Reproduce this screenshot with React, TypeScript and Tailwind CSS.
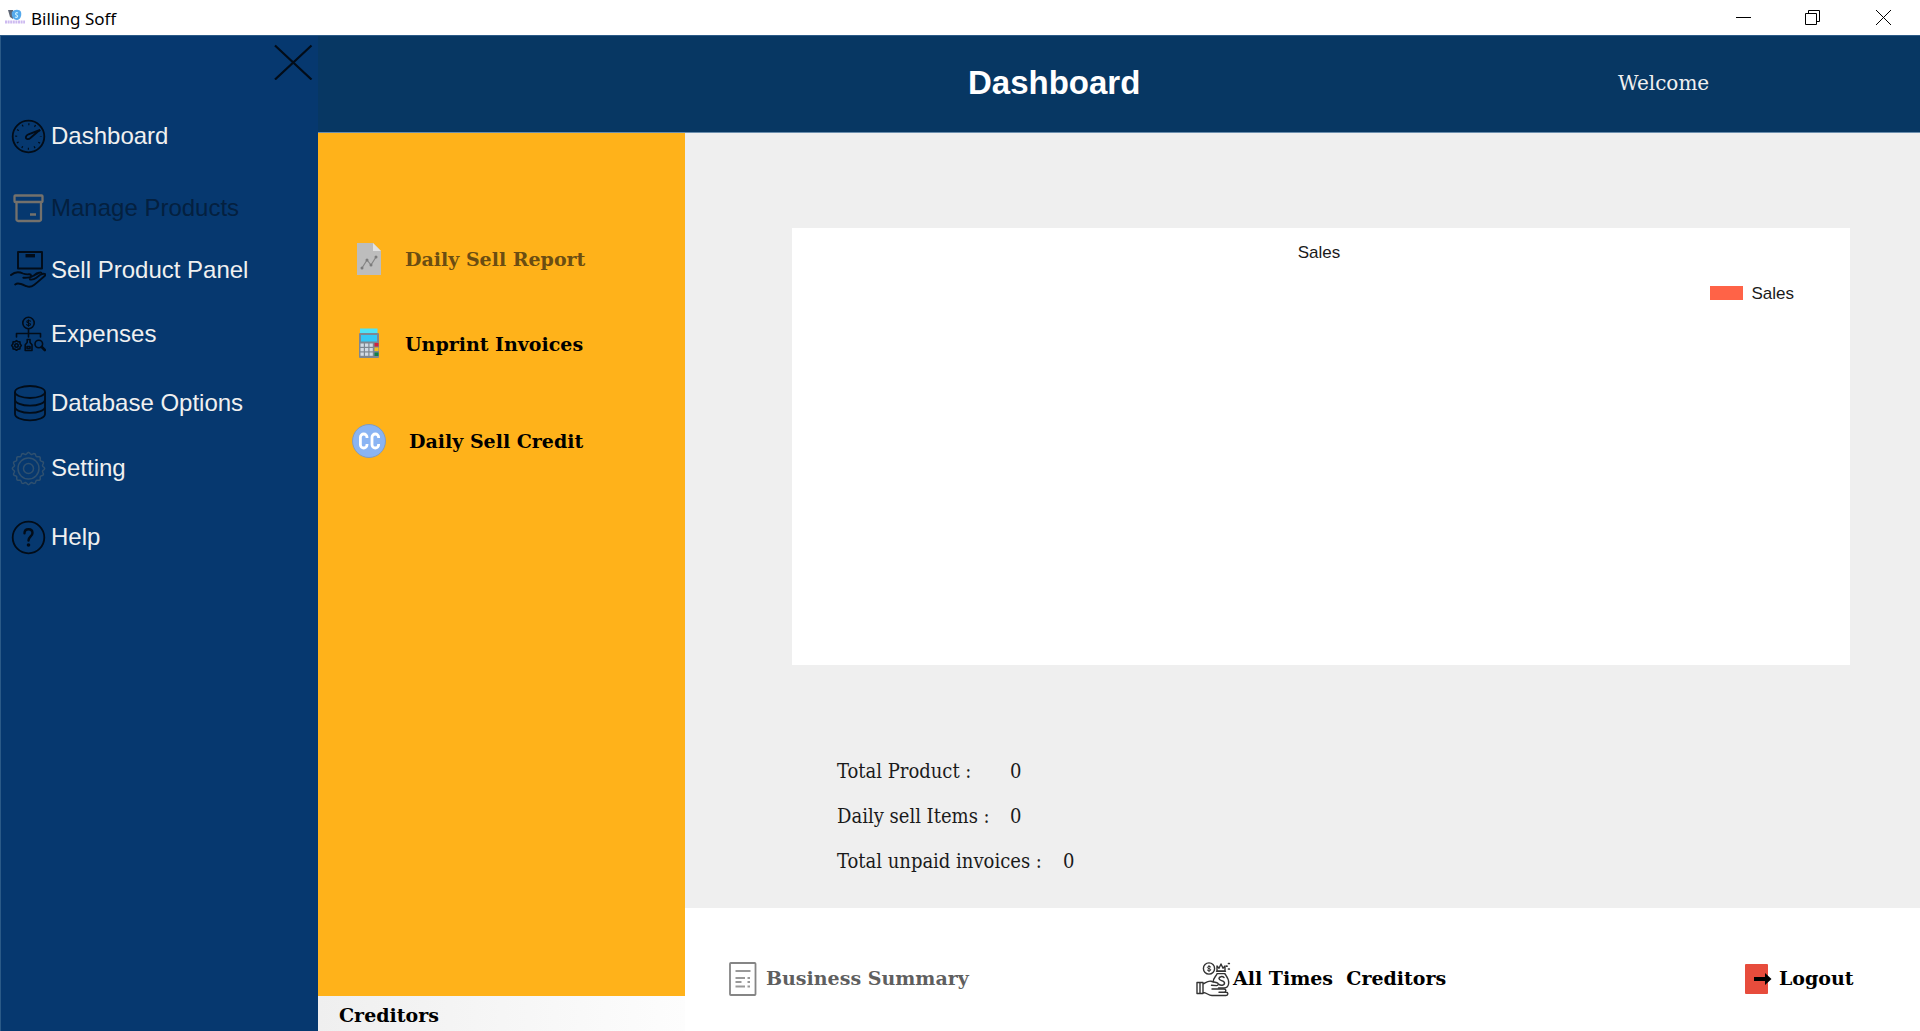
import type { ReactNode } from "react";

const condensedSerif = "font-['DejaVu_Serif_Condensed','DejaVu_Serif',serif]";
const boldSerif = "font-['DejaVu_Serif',serif] text-[19px] font-bold";

function GaugeIcon() {
  return (
    <svg width="36" height="36" viewBox="0 0 36 36" fill="none" stroke="#020c18" strokeWidth="1.8" strokeLinecap="round">
      <circle cx="18.5" cy="18.5" r="15.800" />
      <circle cx="18.5" cy="18.5" r="12.3" strokeWidth="2" strokeDasharray="1.2 5.24" strokeDashoffset="0.6" strokeLinecap="butt" />
      <path d="M15.8 19.2c.3-1.500 1.300-2.200 2.700-2.900L30 11.800l-9.300 8c-1 .9-2 1.600-3.400 1.300-1-.2-1.600-1-1.500-1.900z" />
    </svg>
  );
}

function ArchiveIcon() {
  return (
    <svg width="36" height="36" viewBox="0 0 36 36" fill="none" stroke="#74716c" strokeWidth="2.300" strokeLinejoin="round">
      <rect x="4.500" y="5.500" width="28" height="6.500" rx="0.8" />
      <path d="M6.500 12v17.500a1.500 1.500 0 0 0 1.500 1.500h21.500a1.500 1.500 0 0 0 1.500-1.500V12M20 24.500h6" />
    </svg>
  );
}

function HandBoxIcon() {
  return (
    <svg width="36" height="38" viewBox="0 0 36 38" fill="none" stroke="#020c18" strokeWidth="1.900" strokeLinecap="round" strokeLinejoin="round">
      <rect x="8" y="1" width="24" height="16.500" />
      <path d="M15.500 4.700h9.500" strokeWidth="3.400" strokeLinecap="butt" />
      <path d="M1 24c4-3.500 8-3.500 12-1.500 2 .9 4 1 6 .8 2.500-.2 3 2.600.3 3.100-2.300.4-4 .6-6 .3M20 26.500l9-4.700c2-1 3.200.3 2 1.700M24 24.500c2-2 4-3 5.500-2.700M31 23.500c2.500-1.500 5.200-.5 4.500.7-5 4.300-8 7.300-11.500 9.800-2.500 1.900-5 2.300-7.500 1.200-3.500-1.500-6-2.700-8.500-2.700-1.200 0-2 .4-2.800 1M20 28.500c3 .4 4.500-.3 6-1.500l4-3" />
    </svg>
  );
}

function ExpensesIcon() {
  return (
    <svg width="36" height="36" viewBox="0 0 36 36" fill="none" stroke="#020c18" strokeWidth="1.600" strokeLinecap="round" strokeLinejoin="round">
      <circle cx="18.500" cy="7" r="5.700" />
      <path d="M20.500 5.200c-1-1-3.700-.9-3.700.6 0 1.600 3.700.7 3.700 2.500 0 1.400-2.700 1.600-3.900.4M18.500 3.700v6.600" strokeWidth="1.100" />
      <path d="M18.500 13v8M6.500 21v-3.500h24V21" />
      <path d="M6.500 24.600l1.500 1.200 1.900.1.200 2 1.200 1.600-1.200 1.600-.2 1.900-1.900.1-1.500 1.200-1.500-1.200-1.900-.1-.2-1.900-1.200-1.600 1.200-1.600.2-2 1.900-.1z" />
      <circle cx="6.500" cy="29.500" r="1.700" />
      <path d="M17.200 23.500h2.800v3l2 2.200v5.800h-6.800v-5.800l2-2.200zM17 30.500h3v2h-3z" />
      <circle cx="28.800" cy="28" r="3.800" />
      <path d="M31.800 31l3 3" strokeWidth="2.600" />
    </svg>
  );
}

function DatabaseIcon() {
  return (
    <svg width="36" height="38" viewBox="0 0 36 38" fill="none" stroke="#020c18" strokeWidth="1.800">
      <ellipse cx="20" cy="8" rx="15" ry="6" />
      <path d="M5 8v22c0 3.600 6.700 6.300 15 6.300S35 33.600 35 30V8M5 15.500c0 3.500 6.700 6.200 15 6.200s15-2.700 15-6.200M5 22.700c0 3.500 6.700 6.200 15 6.200s15-2.700 15-6.200" />
    </svg>
  );
}

function GearIcon() {
  const points = Array.from({ length: 161 }, (_, i) => {
    const a = (i / 160) * Math.PI * 2;
    const r = 15.2 + 0.9 * Math.cos(a * 16);
    return `${(18.5 + r * Math.sin(a)).toFixed(2)},${(18.5 - r * Math.cos(a)).toFixed(2)}`;
  }).join(" ");
  return (
    <svg width="36" height="36" viewBox="0 0 36 36" fill="none" stroke="#2f506f" strokeWidth="1.500">
      <polygon points={points} />
      <circle cx="18.500" cy="18.500" r="10.500" />
      <circle cx="18.500" cy="18.500" r="5" />
    </svg>
  );
}

function HelpIcon() {
  return (
    <svg width="36" height="36" viewBox="0 0 36 36" fill="none" stroke="#020c18" strokeWidth="1.800">
      <circle cx="18.500" cy="18.500" r="15.800" />
      <path d="M14.500 14.300c0-2.500 1.700-4 4-4s4 1.500 4 3.700c0 3.300-4 3.600-4 7.500" strokeWidth="2.400" strokeLinecap="round" />
      <circle cx="18.500" cy="26" r="1.800" fill="#020c18" stroke="none" />
    </svg>
  );
}

function ReportIcon() {
  return (
    <svg width="36" height="36" viewBox="0 0 36 36">
      <path d="M7 2h16l8 8v24H7z" fill="#bdbdbd" />
      <path d="M23 2l8 8h-8z" fill="#e2e2e2" />
      <path d="M12 27l5-8 4 5 5-8" fill="none" stroke="#868686" strokeWidth="1.200" />
      <g fill="#7b7b7b">
        <circle cx="12" cy="27" r="1.500" />
        <circle cx="17" cy="19" r="1.500" />
        <circle cx="21" cy="24" r="1.500" />
        <circle cx="26" cy="16" r="1.500" />
      </g>
    </svg>
  );
}

function CalculatorIcon() {
  const rows = [17.5, 22, 26.5];
  return (
    <svg width="36" height="36" viewBox="0 0 36 36">
      <path d="M10 2.500h17.500v5H10z" fill="#4fe3f7" />
      <rect x="9" y="7" width="20" height="25" rx="1" fill="#7d8792" />
      <rect x="11" y="9" width="16" height="6.500" fill="#35c8f5" />
      {rows.map((y) => (
        <g key={y} fill="#d3dbe4">
          <rect x="10.500" y={y} width="3.300" height="3.300" />
          <rect x="15" y={y} width="3.300" height="3.300" />
          <rect x="19.500" y={y} width="3.300" height="3.300" />
        </g>
      ))}
      <rect x="24.500" y="17" width="4" height="3.500" fill="#d0233f" />
      <rect x="24.500" y="21.500" width="4" height="3.500" fill="#f0c020" />
      <rect x="24.500" y="26.500" width="4" height="3.500" fill="#12804a" />
    </svg>
  );
}

function CreditIcon() {
  return (
    <svg width="36" height="36" viewBox="0 0 36 36" fill="none">
      <circle cx="19" cy="18" r="16.500" fill="#8ab4f3" stroke="#869cb8" />
      <path d="M17 15v-.7a3.300 3.300 0 0 0-6.600 0v7.400a3.300 3.300 0 0 0 6.600 0V21M28.600 15v-.7a3.300 3.300 0 0 0-6.600 0v7.400a3.300 3.300 0 0 0 6.600 0V21" stroke="#fff" strokeWidth="2.800" />
    </svg>
  );
}

function SummaryIcon() {
  return (
    <svg width="28" height="34" viewBox="0 0 28 34" fill="none" stroke="#999" strokeWidth="1.900">
      <rect x="1" y="1" width="25.500" height="32" rx="0.8" stroke="#858585" strokeWidth="1.800" />
      <path d="M6.500 9h15M6.500 16h9.500M6.500 20h6M6.500 24.500h9.500M18.500 16h2.500M18.500 20h2.500M18.500 24.500h2.500" />
    </svg>
  );
}

function MoneyHandIcon() {
  return (
    <svg width="36" height="36" viewBox="0 0 36 36" fill="none" stroke="#333" strokeWidth="1.400" strokeLinecap="round" strokeLinejoin="round">
      <circle cx="13" cy="7.500" r="5.600" />
      <path d="M14.800 6c-.8-1-3.400-.9-3.400.5 0 1.500 3.400.7 3.400 2.300 0 1.300-2.500 1.500-3.500.3M13 4.500v6.200" strokeWidth="1" />
      <path d="M21 5l2 2.200 2-4.200 2 4.200L29 5v5h-8zM20.500 10.200h9M21 12.600h8M21 13c-1.500 3-3.800 4-3.800 8M29 13c2 3 4 5 3.700 9-.2 3-1.700 5-4.700 5h-5.500" />
      <path d="M28 16.500c-1.500-1.400-5-1.200-5 1.100 0 2.500 5.500 1.500 5.500 4.500 0 2.500-4 2.700-5.600 1.100" strokeWidth="1.500" />
      <path d="M1 21.500h6v11H1zM4 21.500v11M7 23c3-1.500 5-3.500 8-2.800l6 1.500c2 .5 1.500 3-.5 2.900l-5-.3M7 31.500c4 0 5 3 9 3h14c2.500 0 2.500-3.300 0-3.300h-7M16 28h12c2.500 0 2.500 3.200 0 3.200" />
      <path d="M32.500 2.500h.8M32.500 8h.8M30.500 5.200h.5" strokeWidth="1.700" />
    </svg>
  );
}

function LogoutIcon() {
  return (
    <svg width="28" height="32" viewBox="0 0 28 32">
      <rect x="0" y="1" width="23" height="30" rx="1" fill="#e74c3c" />
      <path d="M9 14h11V10L26.500 16l-6.500 6V18H9z" fill="#000" />
    </svg>
  );
}

function AppLogo() {
  return (
    <svg width="20" height="18" viewBox="0 0 20 18">
      <path d="M3 1h5v9L5 8z" fill="#5f6675" />
      <path d="M7 3c2-3 8-3 9 0 1 4-1 8-4 8-4 0-6-4-5-8z" fill="#55a9ec" />
      <path d="M13 4c-2-1-3.500 1-1.500 2s1 3-1.500 2" fill="none" stroke="#c9f0ff" strokeWidth="1.200" />
      <path d="M0 13h20" stroke="#cdbaf0" strokeWidth="3" strokeDasharray="2 0.600" />
    </svg>
  );
}

function NavItem({ icon, label, gap, disabled }: { icon: ReactNode; label: string; gap: string; disabled?: boolean }) {
  return (
    <li className={gap}>
      <button
        type="button"
        disabled={disabled}
        className={`flex h-9 w-full items-center gap-[5px] pl-2.5 text-left text-2xl ${disabled ? "text-[#04203f]" : "text-[#f0f0f0]"}`}
      >
        <span className="flex h-9 w-9 shrink-0 items-center">{icon}</span>
        <span>{label}</span>
      </button>
    </li>
  );
}

function PanelItem({
  icon,
  label,
  gap,
  indent = "pl-[19px]",
  disabled,
}: {
  icon: ReactNode;
  label: string;
  gap: string;
  indent?: string;
  disabled?: boolean;
}) {
  return (
    <button
      type="button"
      disabled={disabled}
      className={`flex h-9 items-center pl-8 text-left ${boldSerif} ${gap} ${disabled ? "text-[#6b4d12]" : "text-black"}`}
    >
      <span className="w-9 shrink-0">{icon}</span>
      <span className={`flex-1 ${indent}`}>{label}</span>
    </button>
  );
}

function Stat({ label, value, labelWidth }: { label: string; value: number; labelWidth: string }) {
  return (
    <div className="flex items-center">
      <dt className={labelWidth}>{label}</dt>
      <dd>{value}</dd>
    </div>
  );
}

export default function App() {
  return (
    <div className="flex min-h-screen flex-col bg-white font-['Liberation_Sans',sans-serif]">
      <header className="flex h-[35px] items-center justify-between pl-[5px]">
        <div className="flex items-center gap-1.5 font-['Noto_Sans',sans-serif] text-[17px] text-black">
          <AppLogo />
          <span className="pt-0.5">Billing Soff</span>
        </div>
        <div className="flex pr-px pb-px">
          <button type="button" aria-label="Minimize" className="flex h-8 w-[70px] items-center justify-center">
            <svg width="15" height="15" viewBox="0 0 15 15"><path d="M0 7.500h15" stroke="#000" /></svg>
          </button>
          <button type="button" aria-label="Restore" className="flex h-8 w-[69px] items-center justify-center">
            <svg width="15" height="15" viewBox="0 0 15 15" fill="none" stroke="#000">
              <path d="M.5 3.500h11v11H.5zM3.500 3.500V.5h11v11h-3" />
            </svg>
          </button>
          <button type="button" aria-label="Close window" className="flex h-8 w-[72px] items-center justify-center">
            <svg width="15" height="15" viewBox="0 0 15 15"><path d="M0 0l15 15M15 0L0 15" stroke="#000" /></svg>
          </button>
        </div>
      </header>

      <div className="flex flex-1">
        <nav aria-label="Main" className="flex w-[318px] shrink-0 flex-col border-t border-l border-[#2b5a87] bg-[#06386f]">
          <button type="button" aria-label="Close menu" className="mt-2 mr-[5px] self-end">
            <svg width="40" height="36" viewBox="0 0 40 36"><path d="M2 1.500l36.500 34M38.500 1.500L2 35.500" stroke="#020c18" strokeWidth="2.200" /></svg>
          </button>
          <ul className="-ml-px flex flex-col pt-[38px]">
            <NavItem icon={<GaugeIcon />} label="Dashboard" gap="mb-9" />
            <NavItem icon={<ArchiveIcon />} label="Manage Products" gap="mb-[26px]" disabled />
            <NavItem icon={<HandBoxIcon />} label="Sell Product Panel" gap="mb-7" />
            <NavItem icon={<ExpensesIcon />} label="Expenses" gap="mb-[33px]" />
            <NavItem icon={<DatabaseIcon />} label="Database Options" gap="mb-[29px]" />
            <NavItem icon={<GearIcon />} label="Setting" gap="mb-[33px]" />
            <NavItem icon={<HelpIcon />} label="Help" gap="mb-0" />
          </ul>
        </nav>

        <div className="flex min-w-0 flex-1 flex-col">
          <div className="grid h-[98px] grid-cols-[650fr_650fr_302fr] items-center border-y border-t-[#2b5a87] border-b-[#6c8fae] bg-[#073763] pb-0.5">
            <span />
            <h1 className="text-[33px] font-bold text-white">Dashboard</h1>
            <span className="font-['DejaVu_Serif',serif] text-xl text-[#f0f0f0]">Welcome</span>
          </div>

          <div className="flex flex-1">
            <aside className="flex w-[367px] shrink-0 flex-col bg-[#ffb21a]">
              <div className="flex flex-1 flex-col pt-[108px]">
                <PanelItem icon={<ReportIcon />} label="Daily Sell Report" gap="mb-[49px]" disabled />
                <PanelItem icon={<CalculatorIcon />} label="Unprint Invoices" gap="mb-[61px]" />
                <PanelItem icon={<CreditIcon />} label="Daily Sell Credit" gap="mb-0" indent="pl-[23px]" />
              </div>
              <div className={`flex h-[35px] items-center bg-linear-to-r from-[#efefef] to-[#fdfdfd] pt-1 pl-[21px] text-black ${boldSerif}`}>
                Creditors
              </div>
            </aside>

            <main className="flex min-w-0 flex-1 flex-col">
              <div className="flex-1 bg-[#efefef] pt-[95px] pr-[70px] pl-[107px]">
                <section aria-label="Sales chart" className="h-[437px] bg-white pt-3 text-[17px] text-[#1a1a1a]">
                  <h2 className="pr-1 text-center">Sales</h2>
                  <div className="mt-[15px] flex items-center justify-end gap-2 pr-14">
                    <span className="h-3.5 w-[33px] bg-[#ff6347]" />
                    <span>Sales</span>
                  </div>
                </section>
                <dl className={`flex flex-col gap-[17px] pt-[92px] pl-[45px] text-xl text-[#1a1a1a] ${condensedSerif}`}>
                  <Stat label="Total Product :" value={0} labelWidth="w-[173px]" />
                  <Stat label="Daily sell Items :" value={0} labelWidth="w-[173px]" />
                  <Stat label="Total unpaid invoices :" value={0} labelWidth="w-[226px]" />
                </dl>
              </div>

              <footer className={`grid h-[123px] grid-cols-[467fr_549fr_175fr] items-center bg-white pt-[18px] pl-11 text-black ${boldSerif}`}>
                <button type="button" disabled className="flex items-center gap-[9px] text-[#5f5f5f]">
                  <SummaryIcon />
                  Business Summary
                </button>
                <button type="button" className="flex items-center gap-px whitespace-pre">
                  <MoneyHandIcon />
                  {"All Times  Creditors"}
                </button>
                <button type="button" className="flex items-center gap-1.5">
                  <LogoutIcon />
                  Logout
                </button>
              </footer>
            </main>
          </div>
        </div>
      </div>
    </div>
  );
}
